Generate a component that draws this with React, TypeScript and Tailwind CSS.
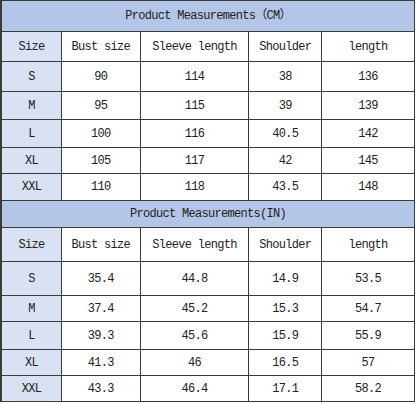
import React from "react";

const widthCls = ["w-[60px]", "w-[79px]", "w-[109px]", "w-[73px]", "w-[92px]"];

type Row = { h: string; cells: string[] };
type Sec = { title: string; titleH: string; rows: Row[] };

const top: Sec = {
  title: "Product Measurements（CM）",
  titleH: "h-[31px]",
  rows: [
    { h: "h-[30px]", cells: ["Size", "Bust size", "Sleeve length", "Shoulder", "length"] },
    { h: "h-[30px]", cells: ["S", "90", "114", "38", "136"] },
    { h: "h-[28px]", cells: ["M", "95", "115", "39", "139"] },
    { h: "h-[28px]", cells: ["L", "100", "116", "40.5", "142"] },
    { h: "h-[26px]", cells: ["XL", "105", "117", "42", "145"] },
    { h: "h-[27px]", cells: ["XXL", "110", "118", "43.5", "148"] },
  ],
};

const bottom: Sec = {
  title: "Product Measurements(IN)",
  titleH: "h-[27px]",
  rows: [
    { h: "h-[34px]", cells: ["Size", "Bust size", "Sleeve length", "Shoulder", "length"] },
    { h: "h-[34px]", cells: ["S", "35.4", "44.8", "14.9", "53.5"] },
    { h: "h-[26px]", cells: ["M", "37.4", "45.2", "15.3", "54.7"] },
    { h: "h-[28px]", cells: ["L", "39.3", "45.6", "15.9", "55.9"] },
    { h: "h-[26px]", cells: ["XL", "41.3", "46", "16.5", "57"] },
    { h: "h-[26px]", cells: ["XXL", "43.3", "46.4", "17.1", "58.2"] },
  ],
};

function Section({ data }: { data: Sec }) {
  return (
    <>
      <div
        className={
          "flex items-center justify-center border-b border-[#3a3a3a] bg-[#b4c6e7] text-[#222] " +
          data.titleH
        }
      >
        {data.title}
      </div>
      {data.rows.map((r, i) => (
        <div key={i} className={"flex " + r.h}>
          {r.cells.map((c, j) => (
            <div
              key={j}
              className={
                "flex items-center justify-center border-b border-[#3a3a3a] text-[#222] " +
                widthCls[j] +
                (j < 4 ? " border-r" : "") +
                (j === 0 ? " bg-[#d9e1f2]" : " bg-white")
              }
            >
              {c}
            </div>
          ))}
        </div>
      ))}
    </>
  );
}

export default function App() {
  return (
    <div className="h-[404px] w-[416px] bg-white">
      <div className="w-[415px] border-l-2 border-r border-t border-[#3a3a3a] font-['Liberation_Mono','Noto_Sans_CJK_SC',monospace] text-[12px] leading-none tracking-[-0.7px]">
        <Section data={top} />
        <Section data={bottom} />
      </div>
    </div>
  );
}
